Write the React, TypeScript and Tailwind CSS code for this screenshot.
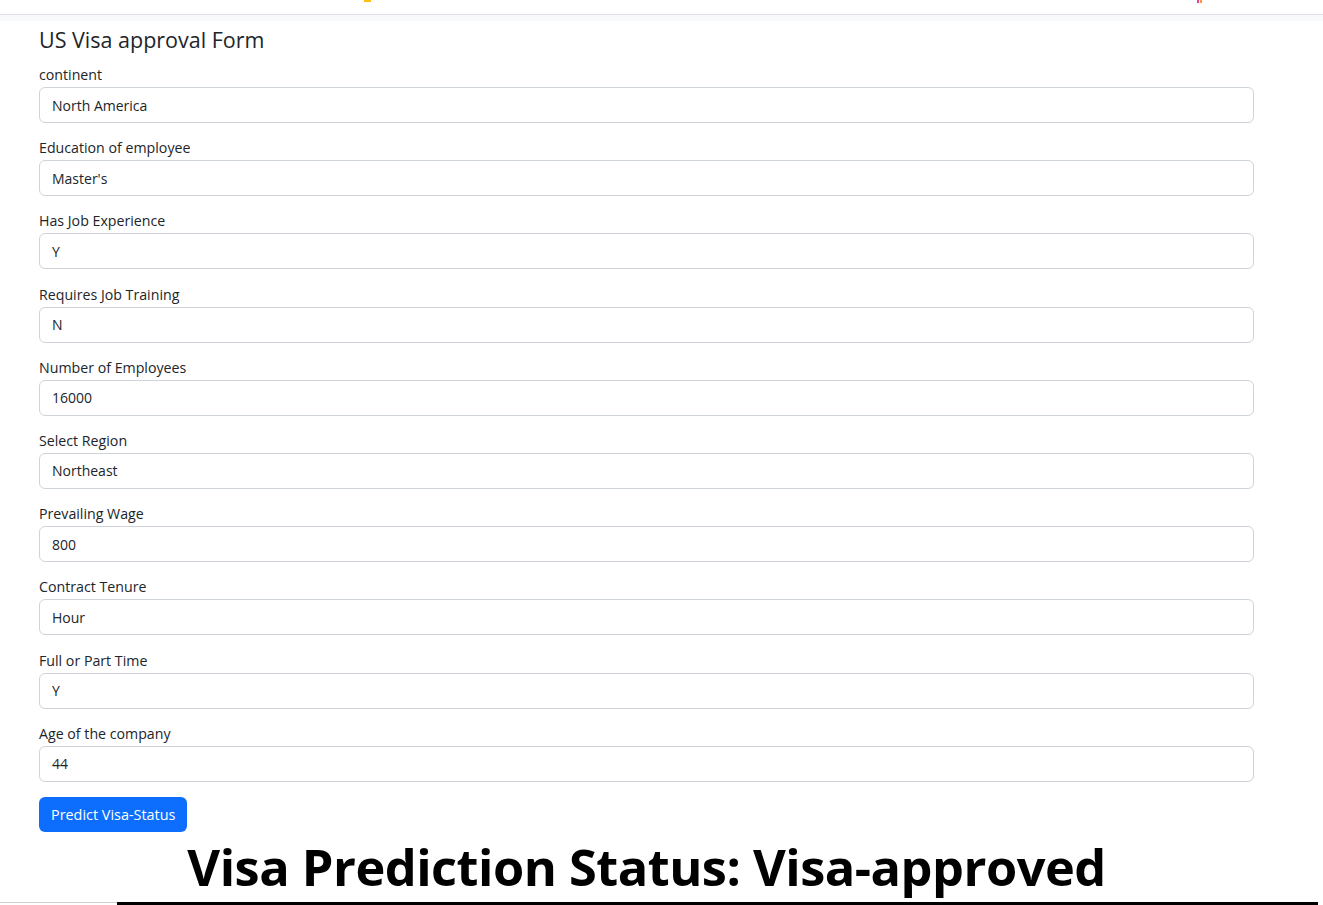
import React from "react";

const fields: { label: string; value: string }[] = [
  { label: "continent", value: "North America" },
  { label: "Education of employee", value: "Master's" },
  { label: "Has Job Experience", value: "Y" },
  { label: "Requires Job Training", value: "N" },
  { label: "Number of Employees", value: "16000" },
  { label: "Select Region", value: "Northeast" },
  { label: "Prevailing Wage", value: "800" },
  { label: "Contract Tenure", value: "Hour" },
  { label: "Full or Part Time", value: "Y" },
  { label: "Age of the company", value: "44" },
];

export default function App() {
  return (
    <div className="min-h-[905px] bg-white text-[#212529] font-['Open_Sans',sans-serif] overflow-hidden">
      {/* top of a cut-off nav bar */}
      <div className="flex h-[15px] border-b border-[#dee2e6]">
        <div className="w-[364px]" />
        <div className="w-[7px] h-[2px] bg-[#ffc107]" />
        <div className="flex-1" />
        <div className="w-[2px] h-[3px] bg-[#e83e8c]" />
        <div className="w-[1px]" />
        <div className="w-[2px] h-[3px] bg-[#fd9843]" />
        <div className="w-[121px]" />
      </div>
      <div className="h-[6px] bg-[#f8f9fa]" />

      <main className="w-[1215px] ml-[39px]">
        <h4 className="text-[21.5px] leading-[28px] mt-[5px] mb-[9px]">US Visa approval Form</h4>

        <form className="flex flex-col">
          {fields.map((f) => (
            <div key={f.label} className="mb-[13.2px]">
              <label className="block text-[14.2px] leading-[24px]">{f.label}</label>
              <input
                readOnly
                value={f.value}
                className="block w-full h-[36px] px-[12px] text-[14px] text-[#212529] border border-[#ced4da] rounded-[6px] outline-none"
              />
            </div>
          ))}
          <button
            type="button"
            className="self-start mt-[2px] h-[35px] px-[12px] rounded-[6px] bg-[#0d6efd] text-white text-[14.4px]"
          >
            Predict Visa-Status
          </button>
        </form>

        <h1 className="text-center text-black font-bold text-[50.5px] leading-[60px] mt-[5px] tracking-[-0.5px]">
          Visa Prediction Status: Visa-approved
        </h1>
      </main>

      <div className="flex mt-[5px]">
        <div className="w-[117px] h-[3px] border-t border-[#d0d0d0]" />
        <div className="w-[1201px] h-[3px] bg-black" />
      </div>
    </div>
  );
}
